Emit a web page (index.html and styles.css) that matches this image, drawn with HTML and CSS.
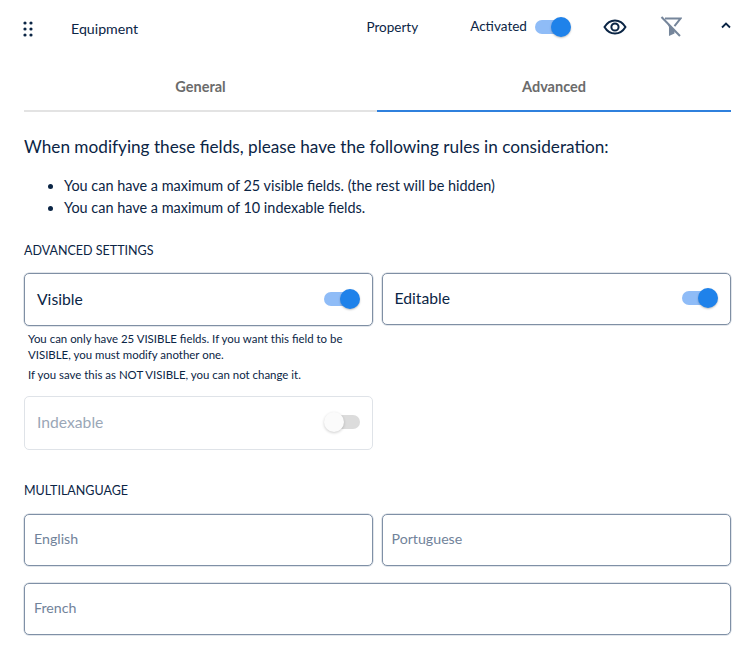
FILE: index.html
```html
<!DOCTYPE html>
<html lang="en">
<head>
<meta charset="utf-8">
<title>Equipment</title>
<link rel="stylesheet" href="styles.css">
</head>
<body>
<main class="panel">
  <header class="head">
    <svg class="grip" width="10" height="16" viewBox="0 0 10 16"><g fill="#0b2545"><circle cx="2" cy="2" r="1.6"/><circle cx="8" cy="2" r="1.6"/><circle cx="2" cy="8" r="1.6"/><circle cx="8" cy="8" r="1.6"/><circle cx="2" cy="14" r="1.6"/><circle cx="8" cy="14" r="1.6"/></g></svg>
    <span class="name">Equipment</span>
    <span class="prop">Property</span>
    <span class="act">Activated</span>
    <span class="toggle head-toggle"><i class="track"></i><i class="knob"></i></span>
    <svg class="eye" width="24" height="16" viewBox="0 0 24 16"><path d="M1.500 8C4 3.800 7.600 1.500 12 1.500S20 3.800 22.500 8C20 12.200 16.400 14.500 12 14.500S4 12.200 1.500 8Z" fill="none" stroke="#0b2545" stroke-width="2"/><circle cx="12" cy="8" r="3.600" fill="none" stroke="#0b2545" stroke-width="2"/></svg>
    <svg class="filter" width="22" height="22" viewBox="0 0 22 22"><path d="M5 2.500H20.500L14.500 10" fill="none" stroke="#76869b" stroke-width="2"/><path d="M7.500 8L14.500 14V17.500L9 20V11Z" fill="#76869b"/><path d="M1.500 1L20 20" stroke="#76869b" stroke-width="2"/></svg>
    <svg class="chev" width="10" height="7" viewBox="0 0 10 7"><path d="M1 5.500L5 1.500L9 5.500" fill="none" stroke="#0b2545" stroke-width="1.800"/></svg>
  </header>

  <nav class="tabs">
    <div class="tab">General</div>
    <div class="tab active">Advanced</div>
  </nav>

  <h1 class="title">When modifying these fields, please have the following rules in consideration:</h1>
  <ul class="rules">
    <li>You can have a maximum of 25 visible fields. (the rest will be hidden)</li>
    <li>You can have a maximum of 10 indexable fields.</li>
  </ul>

  <h2 class="section adv">ADVANCED SETTINGS</h2>
  <div class="grid">
    <div class="col">
      <div class="box tall"><span>Visible</span><span class="toggle"><i class="track"></i><i class="knob"></i></span></div>
      <p class="note">You can only have 25 VISIBLE fields. If you want this field to be VISIBLE, you must modify another one.</p>
      <p class="note second">If you save this as NOT VISIBLE, you can not change it.</p>
      <div class="box disabled"><span>Indexable</span><span class="toggle off"><i class="track"></i><i class="knob"></i></span></div>
    </div>
    <div class="col">
      <div class="box"><span>Editable</span><span class="toggle"><i class="track"></i><i class="knob"></i></span></div>
    </div>
  </div>

  <h2 class="section multi">MULTILANGUAGE</h2>
  <div class="inputs">
    <div class="field">English</div>
    <div class="field">Portuguese</div>
    <div class="field wide">French</div>
  </div>
</main>
</body>
</html>
```
FILE: styles.css
```css
* { box-sizing: border-box; }
html, body { margin: 0; background: #fff; }
body { font-family: "Lato", "Liberation Sans", sans-serif; color: #0b2545; }
.panel { width: 755px; height: 668px; padding: 0 24px; overflow: hidden; }

.head { display: flex; align-items: center; height: 57px; font-size: 13.500px; }
.grip { margin-right: 38px; margin-left: -1px; }
.name { width: 296px; font-size: 14.200px; }
.prop { width: 104px; margin-bottom: 3px; }
.act { width: 65px; margin-bottom: 5px; }
.head-toggle { margin-right: 32px; margin-bottom: 4px; }
.eye { margin-right: 33px; margin-bottom: 4px; }
.filter { margin-right: 39px; margin-bottom: 4px; }
.chev { margin-bottom: 6px; }

.toggle { position: relative; display: block; width: 36px; height: 22px; flex: none; }
.track { position: absolute; left: 0; top: 4px; width: 34px; height: 14px; border-radius: 7px; background: #8fbcf7; }
.knob { position: absolute; right: 0; top: 1px; width: 20px; height: 20px; border-radius: 50%; background: #1f82ea; box-shadow: 0 1px 2px rgba(0,0,0,.25); }
.off .track { background: #dcdcdc; left: 2px; }
.off .knob { right: auto; left: 0; background: #fbfbfb; box-shadow: 0 1px 3px rgba(0,0,0,.2); }

.tabs { display: grid; grid-template-columns: 353px 354px; height: 55px; }
.tab { display: flex; align-items: center; justify-content: center; height: 55px; padding-top: 5px; font-size: 14.500px; font-weight: 700; color: #6b6b6b; border-bottom: 2px solid #e3e3e3; }
.tab.active { border-bottom-color: #2f80dd; }

.title { margin: 23px 0 0; font-size: 17.200px; line-height: 24px; font-weight: 400; }
.rules { margin: 16px 0 0; padding-left: 40px; font-size: 14.450px; line-height: 22px; }

.section { margin: 0; font-size: 12.500px; line-height: 16px; font-weight: 400; }
.adv { margin-top: 24px; }

.grid { display: grid; grid-template-columns: 349px 349px; column-gap: 8.500px; margin-top: 14px; align-items: start; }
.box { display: flex; align-items: center; justify-content: space-between; height: 52px; padding: 0 12px 2px 12px; border: 1px solid #7f8fa4; border-radius: 5px; box-shadow: 0 0 0 .5px rgba(127,143,164,.45); font-size: 15.700px; }
.box.tall { height: 53px; }
.note { margin: 0; padding-left: 4px; font-size: 11.450px; line-height: 16px; }
.box + .note { margin-top: 5px; }
.second { margin-top: 4px; }
.disabled { margin-top: 13px; height: 54px; color: #9aa7b7; border-color: #dfe3e8; box-shadow: none; }

.multi { margin-top: 33px; }
.inputs { display: grid; grid-template-columns: 349px 349px; gap: 17px 8.500px; margin-top: 15px; }
.field { display: flex; align-items: center; height: 52px; padding: 0 0 4px 9px; border: 1px solid #7f90a6; border-radius: 5px; box-shadow: 0 0 0 .5px rgba(127,144,166,.45); font-size: 14.200px; color: #71839a; }
.wide { grid-column: 1 / 3; }
```
